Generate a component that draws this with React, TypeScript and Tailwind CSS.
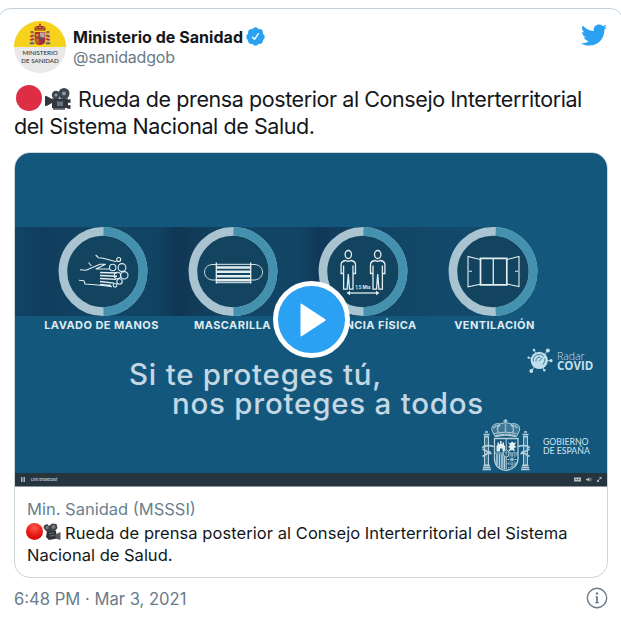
import type { ReactNode } from 'react'
import { FaTwitter } from 'react-icons/fa'

const VerifiedBadge = () => (
  <svg viewBox="0 0 24 24" className="h-[21px] w-[21px] fill-[#2aa1f2]">
    <path d="M22.5 12.5c0-1.58-.875-2.95-2.148-3.6.154-.435.238-.905.238-1.4 0-2.21-1.71-3.998-3.818-3.998-.47 0-.92.084-1.336.25C14.818 2.415 13.51 1.5 12 1.5s-2.816.917-3.437 2.25c-.415-.165-.866-.25-1.336-.25-2.11 0-3.818 1.79-3.818 4 0 .494.083.964.237 1.4-1.272.65-2.147 2.018-2.147 3.6 0 1.495.782 2.798 1.942 3.486-.02.17-.032.34-.032.514 0 2.21 1.708 4 3.818 4 .47 0 .92-.086 1.335-.25.62 1.334 1.926 2.25 3.437 2.25 1.512 0 2.818-.916 3.437-2.25.415.163.865.248 1.336.248 2.11 0 3.818-1.79 3.818-4 0-.174-.012-.344-.033-.513 1.158-.687 1.943-1.99 1.943-3.484zm-6.616-3.334l-4.334 6.5c-.145.217-.382.334-.625.334-.143 0-.288-.04-.416-.126l-.115-.094-2.415-2.415c-.293-.293-.293-.768 0-1.06s.768-.294 1.06 0l1.77 1.767 3.825-5.74c.23-.345.696-.436 1.04-.207.346.23.44.696.21 1.04z" />
  </svg>
)

const Avatar = () => (
  <div className="flex h-[52px] w-[52px] shrink-0 flex-col items-center overflow-hidden rounded-full bg-[#e9e9e9]">
    <div className="flex h-[26px] w-full shrink-0 justify-center bg-[#f7d21c] pt-[2px]">
      <svg viewBox="0 0 22 23" className="h-[23px] w-[22px]">
        <path d="M6 7.800C4 4.500 6.500 2.800 11 2.800s7 1.700 5 5z" fill="#9c3b2c" />
        <path d="M6.500 4.800h2M10 4.500h2M13.500 4.800h2M7 7h8" stroke="#d99a2b" strokeWidth=".8" />
        <path d="M11 .5v2.500M10 1.500h2" stroke="#9c3b2c" strokeWidth="1" />
        <path d="M2 9.500h2.300v10H2zM17.700 9.500H20v10h-2.300z" fill="#b9a39a" />
        <path d="M1.500 9h3.300M17.200 9h3.300" stroke="#8a4a2f" strokeWidth="1.600" />
        <path d="M1 13.500l4-1M1 17l4-1M17 12.500l4 1M17 16l4 1" stroke="#b8352a" strokeWidth="1.700" />
        <path d="M.8 20.300h4.400M16.800 20.300h4.400" stroke="#3f5f7c" strokeWidth="1.800" />
        <path d="M5.700 9h10.600v8.500c0 3-2.300 4.500-5.300 4.500s-5.300-1.500-5.300-4.500z" fill="#b43329" />
        <path d="M11 9.500h4.700v5H11z" fill="#b9a3b0" />
        <path d="M7 11h2.500v2.500H7z" fill="#cf8a35" />
        <path d="M7 15.500v4M9 15.500v5" stroke="#e09a2c" strokeWidth=".9" />
        <path d="M11.500 15.500h4.200v2l-2 3.500h-2.200z" fill="#8e3442" />
        <ellipse cx="11" cy="15" rx="1.500" ry="1.800" fill="#3d5a8a" />
      </svg>
    </div>
    <p className="mt-[2px] text-center font-['Lato',sans-serif] text-[6.200px] leading-[7.600px] font-medium whitespace-nowrap text-[#333]">
      MINISTERIO
      <br />
      DE SANIDAD
    </p>
  </div>
)

const CameraEmoji = ({ className }: { className: string }) => (
  <svg viewBox="0 0 26 22" className={className}>
    <path d="M0 8l2 .3L7 11v4l-5 2.700L0 18z" fill="#31373d" />
    <circle cx="11" cy="7" r="4.200" fill="#3d464e" />
    <circle cx="19" cy="5.500" r="5.500" fill="#3d464e" />
    <path d="M7 10.500h16v9.500H7z" fill="#31373d" />
    <path d="M22 12l3.500-1v4l-3.500-.5zM22 17.500l3.500-.5v4l-3.500-.5z" fill="#31373d" />
    <path d="M8 20h12v1.800H8z" fill="#55616b" />
    <circle cx="11" cy="7" r="1.600" fill="#8899a6" />
    <circle cx="19" cy="5.500" r="2" fill="#8899a6" />
    <path d="M12 13.500h6v4.500h-6z" fill="#66757f" />
  </svg>
)

const GlossyCamera = () => (
  <svg viewBox="0 0 18 18" className="h-[18px] w-[18px]">
    <path d="M1 2.500L4 1l2 2 3-2.500 4.500.5 1 4-2.500 3-8.500.5L.5 5z" fill="#3f4449" />
    <path d="M4 8h9l1 7.500-8 1.500-3-3z" fill="#2f3337" />
    <path d="M12.500 11.500L17.500 9v8l-5-1.500z" fill="#55595e" />
    <circle cx="4" cy="4.500" r="1.500" fill="#777d82" />
    <circle cx="10.500" cy="4" r="2" fill="#777d82" />
    <path d="M6 10.500l5-.5M6.500 13l5-.5" stroke="#7b8085" strokeWidth=".8" />
  </svg>
)

const Ring = ({ split, children }: { split: number; children: ReactNode }) => {
  const r = 40.1
  // where the two colours meet on the circle
  const dy = Math.sqrt(r * r - (split - 45) ** 2)
  return (
    <svg viewBox="0 0 90 89" className="h-[89px] w-[90px]" fill="none" stroke="#e3eef0" strokeWidth="1.1">
      <circle cx="45" cy="44.500" r="37" fill="#12435f" stroke="none" />
      <circle cx="45" cy="44.500" r={r} stroke="#a9c4d0" strokeWidth="8.700" />
      <path
        d={`M${split} ${44.5 - dy}A${r} ${r} 0 0 1 ${split} ${44.5 + dy}`}
        stroke="#4391ae"
        strokeWidth="8.700"
      />
      {children}
    </svg>
  )
}

const Hands = () => (
  <g strokeLinejoin="round">
    <path d="M37.700 28l2.600 2.700L45 31.200l13.500 3.600" />
    <path d="M22 42.700l6 .5 14-6h5.500L38 42h13.500M30.500 35.500l3 3.500" />
    <path d="M21 53.300l5 .5 1 3.200 16 1.300 11 1.500" />
    <path d="M42 45.500l17 .5M42 48.500l17 .7M42 51.500l16 .9M42 54.500l14 1.600M42 57.500l11 1" strokeWidth="1.400" />
    <circle cx="60.700" cy="32.500" r="2" />
    <circle cx="64" cy="40.500" r="3.900" />
    <circle cx="54.700" cy="40.500" r="3.200" />
    <circle cx="66.300" cy="48.300" r="3.700" />
    <circle cx="59.500" cy="48.500" r="3.200" />
    <circle cx="61.500" cy="54.500" r="2.700" />
    <circle cx="57" cy="58.300" r="1.800" />
  </g>
)

const Mask = () => (
  <g>
    <path d="M28 37.500h-4c-10 1-10 14 0 15.500h4M63 37.500h4c10 1 10 14 0 15.500h-4" strokeWidth=".9" />
    <path d="M28.300 35.500v21M62.700 35.500v21" strokeWidth="1.300" />
    <path d="M28 37.300h35M28 55.700h35" strokeWidth="1" />
    <path d="M28 40.500h35M28 44.700h35M28 49.200h35M28 53.200h35" strokeWidth="2.500" />
  </g>
)

const Person = ({ x }: { x: number }) => (
  <g transform={`translate(${x} 0)`} strokeWidth="1.300">
    <ellipse cx="0" cy="27.500" rx="3.200" ry="4" />
    <path d="M-2.500 33.500c-3 .5-4.700 1.500-4.700 4v9h2.500v15.700h3.500L0 47l1.200 15.200h3.500V46.500h2.500v-9c0-2.500-1.700-3.500-4.700-4q-2.500 1.500-5 0zM-4.700 38.500v8M4.700 38.500v8" />
  </g>
)

const Distance = () => (
  <g>
    <Person x={30.3} />
    <Person x={59.7} />
    <path d="M30 66h30" strokeWidth="1.300" />
    <path d="M28.500 66l3.500-2.200v4.400zM61.500 66L58 63.800v4.400z" fill="#e3eef0" stroke="none" />
    <text x="45" y="62.200" textAnchor="middle" fill="#e3eef0" stroke="none" className="font-['Inter',sans-serif] text-[4.300px] font-bold">
      1,5 Mts
    </text>
  </g>
)

const WindowIcon = () => (
  <g>
    <path d="M32.300 32.500L20 29.500v30.300l12.300-2.500M59 32.500l12-3v30l-12-2.500" />
    <path d="M32.500 31.300h26.300v26.500H32.500z" strokeWidth="1.700" />
    <path d="M45.300 31v27" strokeWidth="1.300" />
    <path d="M21 44.300h3M67 44.300h3" />
  </g>
)

const tips = [
  { label: 'LAVADO DE MANOS', icon: <Hands />, split: 45.5 },
  { label: 'MASCARILLA', icon: <Mask />, split: 45.5 },
  { label: 'DISTANCIA FÍSICA', icon: <Distance />, split: 45.5 },
  { label: 'VENTILACIÓN', icon: <WindowIcon />, split: 47.7 }
]

const RadarLogo = () => (
  <svg viewBox="0 0 28 26" className="h-[26px] w-[28px]" fill="#bfe0ea">
    <path d="M12.300 13.300L7 3M12.300 13.300l8.500-9.800M12.300 13.300L24 13.700M12.300 13.300L4.300 24M12.300 13.300l5 10M12.300 13.300L1.500 10.700" stroke="#bfe0ea" strokeWidth=".9" />
    <circle cx="12.300" cy="13.300" r="8.600" />
    <circle cx="7" cy="3" r="1.300" />
    <circle cx="20.800" cy="3.500" r="2" />
    <circle cx="24" cy="13.700" r="1.600" />
    <circle cx="4.300" cy="24" r="1.900" />
    <circle cx="17.300" cy="23.300" r="1.200" />
    <circle cx="1.500" cy="10.700" r="1.100" />
    <path d="M6.500 14.500a6 6 0 0 1 10.500-5M17.800 11.500a6 6 0 0 1-2 6M9 14.500a3.500 3.500 0 0 1 4.500-4M12 14.300l3.500-3.500" fill="none" stroke="#3b7d9c" strokeWidth="1" />
  </svg>
)

const SpainCrest = () => (
  <svg viewBox="0 0 50 54" className="h-[54px] w-[50px] shrink-0" fill="none" stroke="#b5d0db" strokeWidth="1">
    {/* crown */}
    <path d="M24.500 1v5M22.500 3h4" strokeWidth="1.300" />
    <path d="M14 18.500l-2.500-5C9 8 14 4.500 19 6c3-1.500 8-1.500 11 0C35.500 4.500 40.500 8 38 13.500l-2.500 5q-11-2.500-21.500 0z" fill="#3d7697" />
    <path d="M24.500 6.500v8M19 6.500c-3 3-3 5-1.500 8M30 6.500c3 3 3 5 1.500 8M12.500 10q3-3.500 7-2M36.500 10q-3-3.500-7-2" strokeDasharray="1.400 .5" strokeWidth="1.500" />
    <path d="M14.500 18q10-2.700 20.500 0" strokeWidth="1.900" strokeDasharray="1.800 .5" />
    <path d="M13.500 15.500q11-3 22 0" />
    {/* pillars of Hercules */}
    <path d="M2.500 16.500h6M3 18.500h5M4 14h3M41.500 16.500h6M42 18.500h5M43 14h3" strokeWidth="1.700" />
    <path d="M3.500 19v28h4V19zM42.500 19v28h4V19z" fill="#3d7697" />
    <path d="M1.500 30c1-3 10-3 11-1M1.500 31l9 5M1.500 38.500l8-5M48.500 30c-1-3-10-3-11-1M48.500 31l-9 5M48.500 38.500l-8-5" strokeWidth="1.600" />
    <path d="M2.500 47.500h6.500M1.500 51.500h8.500M2 49.500h7.500M41 47.500h6.500M40 51.500h8.500M40.500 49.500h7.500" strokeWidth="1.500" />
    {/* shield */}
    <path d="M13.500 20.500h23.500v20c0 6-4 11-11.700 11.800C17.500 51.500 13.500 47 13.500 40.500z" strokeWidth="1.300" />
    <path d="M13.500 35h23.500M25.200 20.500v31" />
    <path d="M15.500 33.500v-6h1v-3h1.500v1.500h1V23h1.500v3h1v-1.500h1.500v3h1v6h-2.500v-3h-2.500v3z" fill="#e3eef0" stroke="none" />
    <path d="M27 24l2 1.500 2-2 2 1.500 2-1-1.500 3.500 2 1.500-2.500 1 1 3.500-3-1.500-3.500 1.500 1.500-3.500-2-1 2-1.500z" fill="#e3eef0" stroke="none" />
    <path d="M16 36v11M18.500 36v13.500M21 36v14.500M23.300 36v15" strokeWidth="1.600" />
    <path d="M26.500 37l9 9M35.500 37l-9 9M31 36v13M26.500 41.500h9.500M27 37h8.500M27 46h7.500M27 50q6-1 9-6" strokeDasharray="1.400 .5" />
    <ellipse cx="25.200" cy="35.500" rx="2.800" ry="3.500" fill="#14567c" />
    <path d="M24 34.500h2.500M25.200 33.500v4" strokeWidth=".7" />
  </svg>
)

const VideoPoster = () => (
  <div className="relative h-[334px] border-b border-[#8798a3] bg-[#14577d] font-['Inter',sans-serif]">
    <div className="h-[320px] overflow-hidden pt-[74px]">
      <div className="flex h-[89px] items-center bg-[linear-gradient(90deg,#114466_0,#103d5d_30px,#124564_90px,#114362_142px,#103654_162px,#124564_215px,#124465_285px,#103858_303px,#124463_350px,#124767_400px,#134b6d_478px,transparent_478px)] pl-[23px]">
        {tips.map((tip) => (
          <div className="flex w-[130px] shrink-0 justify-center" key={tip.label}>
            <Ring split={tip.split}>{tip.icon}</Ring>
          </div>
        ))}
      </div>
      <div className="-mt-px flex h-[21px] items-center pl-[21px] text-[11px] font-bold tracking-[0.45px] whitespace-nowrap text-[#dfebf0]">
        {tips.map((tip) => (
          <p className="flex w-[131px] shrink-0 justify-center" key={tip.label}>
            {tip.label}
          </p>
        ))}
      </div>
      <div className="flex">
        <div className="w-[466px] shrink-0 pt-[24px] text-[29.500px] leading-[29px] font-medium tracking-[0.760px] whitespace-nowrap text-[#c3d8e4]">
          <p className="pl-[114px]">Si te proteges tú,</p>
          <p className="pl-[157px]">nos proteges a todos</p>
        </div>
        <div className="w-[126px] pt-[11px] text-[#c3dfea]">
          <div className="flex h-[26px] pl-[46px]">
            <RadarLogo />
            <div className="pt-[5px] pl-[2px] font-['Open_Sans',sans-serif] whitespace-nowrap">
              <p className="text-[10.500px] leading-[9px] font-light">Radar</p>
              <p className="text-[11.500px] leading-[9px] font-bold">COVID</p>
            </div>
          </div>
          <div className="mt-[45px] flex h-[54px]">
            <SpainCrest />
            <p className="pt-[19px] pl-3 font-['Lato',sans-serif] text-[8.700px] leading-[9px] font-medium whitespace-nowrap">
              GOBIERNO
              <br />
              DE ESPAÑA
            </p>
          </div>
        </div>
      </div>
    </div>
    <div className="flex h-[13px] items-center bg-[#26353d] px-[6px] text-[#c9d1d4]">
      <svg viewBox="0 0 4 5" className="h-[5px] w-1 fill-[#aab5ba]">
        <path d="M0 0h1.500v5H0zM2.500 0H4v5H2.500z" />
      </svg>
      <span className="ml-[6px] text-[3.700px] leading-none font-semibold">Live broadcast</span>
      <svg viewBox="0 0 30 7" className="mr-[-2px] ml-auto h-[7px] w-[30px]" fill="#b4bfc3">
        <path d="M1 1.500h7v4H1z" />
        <path d="M2.500 3.500h1.500M5 3.500h1.500" stroke="#26353d" strokeWidth=".8" />
        <path d="M13 2.700h1.500l2-1.500v4.600l-2-1.500H13z" />
        <path d="M17.500 2.300v2.400M18.700 1.700v3.600" stroke="#7f8c92" strokeWidth=".6" />
        <path d="M26 1h2.500v2.500zM24 3.500V6h2.500z" />
        <path d="M25 5l3-3.500" stroke="#b4bfc3" strokeWidth=".8" />
      </svg>
    </div>
    <button
      aria-label="Play"
      className="absolute top-[128px] left-[258px] flex h-[77px] w-[77px] items-center justify-center rounded-full border-[5px] border-white bg-[#2aa1f2]"
    >
      <svg viewBox="0 0 26 34" className="ml-[3px] h-[34px] w-[26px] fill-white">
        <path d="M.5 1.500Q.5 0 2 1l23 15q1.200 1 0 2L2 33Q.5 34 .5 32.500z" />
      </svg>
    </button>
  </div>
)

const App = () => {
  return (
    <div className="h-[621px] w-[621px] overflow-hidden bg-white pt-2 font-['Inter',sans-serif] text-[#14171a]">
      <article className="-ml-[3px] h-[640px] w-[627px] rounded-[14px] border border-[#c5d2dc] pt-3 pr-[15px] pl-4">
        <header className="flex">
          <Avatar />
          <div className="pt-[5px] pl-[7px] whitespace-nowrap">
            <div className="flex h-[21px] items-center">
              <span className="text-[16px] font-bold tracking-[0.04px]">Ministerio de Sanidad</span>
              <span className="ml-[2px]">
                <VerifiedBadge />
              </span>
            </div>
            <p className="text-[16px] leading-[21px] tracking-[-0.2px] text-[#697b89]">@sanidadgob</p>
          </div>
          <FaTwitter className="mt-[1px] mr-px ml-auto h-[26px] w-[26px] text-[#2aa1f2]" />
        </header>

        <div className="mt-[13px] text-[21.500px] leading-[27px] tracking-[-0.42px] whitespace-nowrap">
          <p className="flex">
            <span className="-mt-px mr-[3px] ml-[2px] h-[26px] w-[26px] rounded-full bg-[#dd2e44]" />
            <CameraEmoji className="mt-[2px] mr-[7px] h-[22px] w-[26px]" />
            Rueda de prensa posterior al Consejo Interterritorial
          </p>
          <p>del Sistema Nacional de Salud.</p>
        </div>

        <section className="mt-3 h-[426px] overflow-hidden rounded-[16px] border border-[#ccd6dd]">
          <VideoPoster />
          <div className="pt-[10px] pl-3 text-[16.500px] leading-[22px] whitespace-nowrap">
            <p className="mb-px leading-[24px] text-[#697f90]">Min. Sanidad (MSSSI)</p>
            <p className="flex tracking-[0.06px]">
              <span className="mt-[1px] -ml-px h-[17px] w-[17px] rounded-full bg-[radial-gradient(circle_at_50%_25%,#ff5a4a,#e3120f_60%,#b80d0c)]" />
              <span className="mt-[1px] mr-[4px]">
                <GlossyCamera />
              </span>
              Rueda de prensa posterior al Consejo Interterritorial del Sistema
            </p>
            <p>Nacional de Salud.</p>
          </div>
        </section>

        <footer className="mt-[11px] flex h-5 items-center justify-between text-[#697b89]">
          <span className="text-[16.600px] whitespace-nowrap">6:48 PM · Mar 3, 2021</span>
          <svg viewBox="0 0 22 22" className="-mt-[2px] h-[22px] w-[22px]" fill="none" stroke="#697b89">
            <circle cx="11" cy="11" r="9.700" strokeWidth="1.400" />
            <path d="M11 9.500V16" strokeWidth="1.800" />
            <path d="M9.500 9.700H11M9 15.800h4" strokeWidth="1" />
            <circle cx="11" cy="6.500" r="1.200" fill="#697b89" stroke="none" />
          </svg>
        </footer>
      </article>
    </div>
  )
}

export default App
